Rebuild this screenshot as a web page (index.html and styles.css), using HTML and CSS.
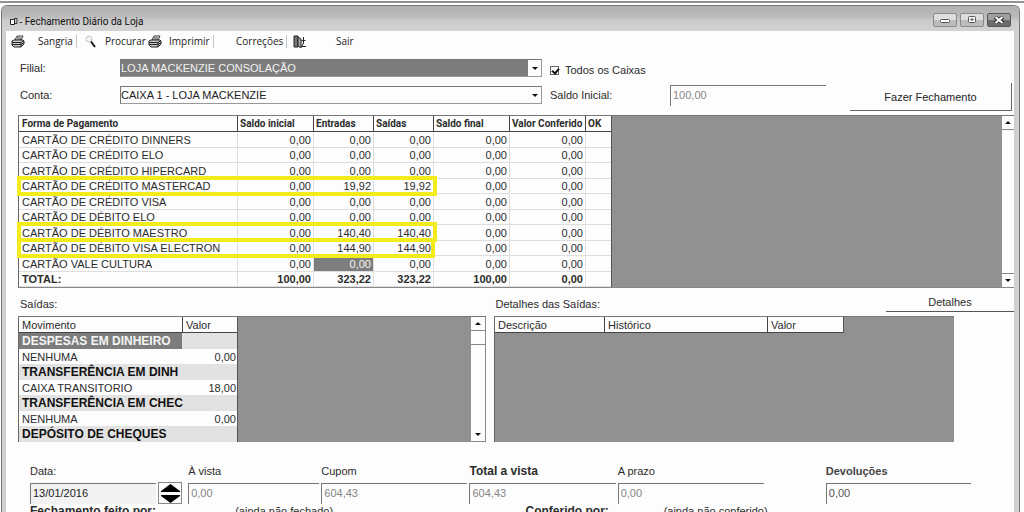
FILE: index.html
```html
<!DOCTYPE html>
<html lang="pt-BR">
<head>
<meta charset="utf-8">
<title>Fechamento Diário da Loja</title>
<link rel="stylesheet" href="styles.css">
</head>
<body>
<div class="desktop">
<main class="window">
  <header class="titlebar">
    <svg class="app-icon" width="9" height="9" viewBox="0 0 9 9"><path d="M1.500 2.500h4v5h-4z" fill="#fff" stroke="#222"/><path d="M1 2.500h5M5 1.500h3v5H6" fill="none" stroke="#333"/></svg>
    <span class="dash">-</span>
    <h1 class="title">Fechamento Diário da Loja</h1>
    <div class="win-buttons">
      <button class="win-btn" aria-label="Minimizar"><svg width="12" height="8" viewBox="0 0 12 8"><rect x="1.500" y="3.500" width="9" height="3" rx="1" fill="#fff" stroke="#555"/></svg></button>
      <button class="win-btn" aria-label="Maximizar"><svg width="12" height="8" viewBox="0 0 12 8"><rect x="2.500" y=".5" width="7" height="6" rx="1" fill="#fff" stroke="#555"/><path d="M4.500 3.500h3" stroke="#555" stroke-width="2"/></svg></button>
      <button class="win-btn win-close" aria-label="Fechar"><svg width="12" height="8" viewBox="0 0 12 8"><path d="M2 1l8 6M10 1L2 7" stroke="#333" stroke-width="4"/><path d="M2.500 1l7 6M9.500 1l-7 6" stroke="#fff" stroke-width="2"/></svg></button>
    </div>
  </header>

  <div class="client">
    <nav class="toolbar">
      <button class="tool tool-sangria"><svg width="14" height="13" viewBox="0 0 14 13"><path d="M4 5l2-4h6l-2 4z" fill="#fff" stroke="#333"/><path d="M1 6l2-1h9l1 1v3l-3 3H3L1 10z" fill="#ccc" stroke="#222"/><path d="M1 7.500h9l3-2M1 9.500h9l3-2M10 8v4M6 3h4" stroke="#222" fill="none"/></svg><span>Sangria</span></button>
      <button class="tool tool-procurar"><svg width="11" height="13" viewBox="0 0 11 13"><circle cx="4" cy="4" r="3" fill="#f4f4f4" stroke="#aaa" stroke-dasharray="2 1"/><path d="M6 6.500L10 12" stroke="#111" stroke-width="2"/></svg><span>Procurar</span></button>
      <button class="tool tool-imprimir"><svg width="14" height="13" viewBox="0 0 14 13"><path d="M4 5l2-4h6l-2 4z" fill="#fff" stroke="#333"/><path d="M1 6l2-1h9l1 1v3l-3 3H3L1 10z" fill="#ccc" stroke="#222"/><path d="M1 7.500h9l3-2M1 9.500h9l3-2M10 8v4M6 3h4" stroke="#222" fill="none"/></svg><span>Imprimir</span></button>
      <button class="tool tool-correcoes"><span>Correções</span></button>
      <button class="tool tool-sair"><svg width="13" height="13" viewBox="0 0 13 13"><path d="M1 1h4v11H1z" fill="#777" stroke="#222"/><path d="M5 2l3 2v9L5 11z" fill="#aaa" stroke="#222"/><path d="M8 11.500h5M10.500 2v6M8.500 5.500h4M10.500 8L9 11" stroke="#222" fill="none"/></svg><span>Sair</span></button>
    </nav>

    <form class="filters">
      <label for="filial">Filial:</label>
      <div class="combo combo-active"><select id="filial"><option>LOJA MACKENZIE CONSOLAÇÃO</option></select><span class="combo-arrow"></span></div>
      <label class="check"><input type="checkbox" checked>Todos os Caixas</label>
      <label class="row-two" for="conta">Conta:</label>
      <div class="combo"><select id="conta"><option>CAIXA 1 - LOJA MACKENZIE</option></select><span class="combo-arrow"></span></div>
      <label class="saldo-label" for="saldo">Saldo Inicial:</label>
      <input class="field" id="saldo" value="100,00" disabled>
      <button class="btn-close-day" type="button">Fazer Fechamento</button>
    </form>

    <section class="sheet payments">
      <table class="grid">
        <colgroup><col class="c-form"><col class="c-wide"><col class="c-in"><col class="c-in"><col class="c-wide"><col class="c-wide"><col class="c-ok"></colgroup>
        <thead><tr><th>Forma de Pagamento</th><th>Saldo inicial</th><th>Entradas</th><th>Saídas</th><th>Saldo final</th><th>Valor Conferido</th><th>OK</th></tr></thead>
        <tbody>
          <tr><td>CARTÃO DE CRÉDITO DINNERS</td><td>0,00</td><td>0,00</td><td>0,00</td><td>0,00</td><td>0,00</td><td></td></tr>
          <tr><td>CARTÃO DE CRÉDITO ELO</td><td>0,00</td><td>0,00</td><td>0,00</td><td>0,00</td><td>0,00</td><td></td></tr>
          <tr><td>CARTÃO DE CRÉDITO HIPERCARD</td><td>0,00</td><td>0,00</td><td>0,00</td><td>0,00</td><td>0,00</td><td></td></tr>
          <tr><td>CARTÃO DE CRÉDITO MASTERCAD</td><td>0,00</td><td>19,92</td><td>19,92</td><td>0,00</td><td>0,00</td><td></td></tr>
          <tr><td>CARTÃO DE CRÉDITO VISA</td><td>0,00</td><td>0,00</td><td>0,00</td><td>0,00</td><td>0,00</td><td></td></tr>
          <tr><td>CARTÃO DE DÉBITO ELO</td><td>0,00</td><td>0,00</td><td>0,00</td><td>0,00</td><td>0,00</td><td></td></tr>
          <tr><td>CARTÃO DE DÉBITO MAESTRO</td><td>0,00</td><td>140,40</td><td>140,40</td><td>0,00</td><td>0,00</td><td></td></tr>
          <tr><td>CARTÃO DE DÉBITO VISA ELECTRON</td><td>0,00</td><td>144,90</td><td>144,90</td><td>0,00</td><td>0,00</td><td></td></tr>
          <tr><td>CARTÃO VALE CULTURA</td><td>0,00</td><td class="selected">0,00</td><td>0,00</td><td>0,00</td><td>0,00</td><td></td></tr>
          <tr class="total"><td>TOTAL:</td><td>100,00</td><td>323,22</td><td>323,22</td><td>100,00</td><td>0,00</td><td></td></tr>
        </tbody>
      </table>
      <div class="scrollbar"><button class="sb-btn up" aria-label="Rolar para cima"></button><button class="sb-btn down" aria-label="Rolar para baixo"></button></div>
      <div class="mark mark-mastercad"></div>
      <div class="mark mark-maestro"></div>
      <div class="mark mark-visa"></div>
    </section>

    <div class="captions">
      <h2>Saídas:</h2>
      <h2>Detalhes das Saídas:</h2>
      <button class="btn-details">Detalhes</button>
    </div>

    <div class="lower">
      <section class="sheet moves">
        <table class="grid small">
          <colgroup><col class="c-move"><col class="c-value"></colgroup>
          <thead><tr><th>Movimento</th><th>Valor</th></tr></thead>
          <tbody>
            <tr class="group"><td class="selected">DESPESAS EM DINHEIRO</td><td></td></tr>
            <tr><td>NENHUMA</td><td>0,00</td></tr>
            <tr class="group"><td>TRANSFERÊNCIA EM DINH</td><td></td></tr>
            <tr><td>CAIXA TRANSITORIO</td><td>18,00</td></tr>
            <tr class="group"><td>TRANSFERÊNCIA EM CHEC</td><td></td></tr>
            <tr><td>NENHUMA</td><td>0,00</td></tr>
            <tr class="group"><td>DEPÓSITO DE CHEQUES</td><td></td></tr>
          </tbody>
        </table>
        <div class="scrollbar wide"><button class="sb-btn up" aria-label="Rolar para cima"></button><span class="thumb"></span><button class="sb-btn down" aria-label="Rolar para baixo"></button></div>
      </section>
      <section class="sheet details">
        <table class="grid small">
          <colgroup><col class="c-desc"><col class="c-hist"><col class="c-dval"></colgroup>
          <thead><tr><th>Descrição</th><th>Histórico</th><th>Valor</th></tr></thead>
        </table>
      </section>
    </div>

    <form class="totals">
      <div class="cell"><label for="data">Data:</label><input class="field date" id="data" value="13/01/2016"></div>
      <div class="spinner"><button type="button" aria-label="Dia seguinte"><svg width="19" height="8" viewBox="0 0 19 8"><path d="M9.500 0L19 7v1H0V7z"/></svg></button><button type="button" aria-label="Dia anterior"><svg width="19" height="8" viewBox="0 0 19 8"><path d="M9.500 8L19 1V0H0v1z"/></svg></button></div>
      <div class="cell"><label for="avista">À vista</label><input class="field" id="avista" value="0,00" disabled></div>
      <div class="cell"><label for="cupom">Cupom</label><input class="field" id="cupom" value="604,43" disabled></div>
      <div class="cell"><label class="strong" for="total">Total a vista</label><input class="field" id="total" value="604,43" disabled></div>
      <div class="cell"><label for="aprazo">A prazo</label><input class="field" id="aprazo" value="0,00" disabled></div>
      <div class="cell refunds"><label class="strong" for="devol">Devoluções</label><input class="field" id="devol" value="0,00" disabled></div>
    </form>

    <footer class="signoff">
      <b>Fechamento feito por:</b><span>(ainda não fechado)</span>
      <b>Conferido por:</b><span>(ainda não conferido)</span>
    </footer>
  </div>
</main>
</div>
</body>
</html>
```

FILE: styles.css
```css
* { box-sizing: border-box; }

body {
  margin: 0;
  background: #fdfdfd;
  color: #2c2c2c;
  font: 11px/14px "Liberation Sans", Arial, sans-serif;
}

button, input, select {
  font: inherit;
  color: inherit;
  background: none;
  border: 0;
  border-radius: 0;
  padding: 0;
  margin: 0;
}

.desktop {
  height: 100vh;
  overflow: hidden;
  padding: 2px 4px 0 1px;
  border-top: 1px solid #fdfdfd;
  background: linear-gradient(#8f9390, #8f9390) 0 0 / 100% 2px no-repeat;
}

.window {
  margin-top: 2px;
  border: 1px solid #777;
  border-bottom: 0;
  border-radius: 6px 6px 0 0;
  background: #cfcfcf;
  padding: 0 5px 0 4px;
}

.titlebar {
  display: flex;
  align-items: center;
  height: 25px;
  margin: 0 -5px 0 -4px;
  padding: 0 8px 0 7px;
  border-radius: 5px 5px 0 0;
  background: linear-gradient(#b0b0b0, #bababa 40%, #cccccc 60%, #d2d2d2);
}

.app-icon { margin-top: 5px; }
.dash { margin: 4px 2px 0 1px; }

.title {
  flex: 1;
  margin: 6px 0 0;
  font: 400 10px/14px Roboto, sans-serif;
  color: #111;
}

.win-buttons { display: flex; gap: 3px; margin-top: 3px; }

.win-btn {
  display: grid;
  place-items: center;
  width: 24px;
  height: 14px;
  border: 1px solid #8a8a8a;
  border-radius: 2px;
  background: linear-gradient(#dedede 50%, #bcbcbc 50%);
}

.win-close {
  background: linear-gradient(#a0a0a0 50%, #6c6c6c 50%);
  border-color: #555;
}

.client { background: #fdfdfd; }

.toolbar {
  display: flex;
  height: 20px;
  font: 10px/14px "Open Sans", sans-serif;
  color: #222;
}

.tool {
  display: flex;
  align-items: center;
  height: 20px;
}

.tool-sangria { width: 70px; gap: 13px; padding-left: 5px; }
.tool-procurar { width: 72px; gap: 9px; padding-left: 9px; }
.tool-imprimir { width: 65px; gap: 7px; }
.tool-correcoes { width: 73px; padding-left: 23px; }
.tool-sair { gap: 30px; padding-left: 7px; }

.tool-procurar, .tool-correcoes, .tool-sair {
  background: linear-gradient(#c4c4c4, #c4c4c4) 0 4px / 1px 13px no-repeat;
}

.filters {
  display: grid;
  grid-template-columns: 100px 422fr 128px 156fr 24px 162fr;
  grid-template-rows: 20px 24px;
  row-gap: 5px;
  align-items: center;
  padding: 7px 2px 0 14px;
}

.row-two { grid-column: 1; }

.combo {
  display: grid;
  grid-template-columns: 1fr 13px;
  height: 18px;
  border: 1px solid #999;
  border-top-color: #777;
  border-left-color: #777;
}

.combo select {
  grid-area: 1 / 1;
  min-width: 0;
  appearance: none;
  line-height: 16px;
  color: #222;
}

.combo-active select {
  background: #7d7d7d;
  color: #f2f2f2;
}

.combo-arrow {
  grid-area: 1 / 2;
  display: grid;
  place-items: center;
}

.combo-arrow::before, .sb-btn::before {
  content: "";
  border: 3px solid transparent;
  border-top-color: #111;
  border-bottom-width: 0;
}

.check {
  display: flex;
  align-items: center;
  gap: 6px;
  padding: 4px 0 0 8px;
  grid-column: 3 / -1;
}

.check input {
  appearance: none;
  width: 9px;
  height: 9px;
  border: 1px solid #666;
  position: relative;
}

.check input:checked::after {
  content: "";
  position: absolute;
  left: 2px;
  top: 0;
  width: 3px;
  height: 5px;
  border: solid #111;
  border-width: 0 2px 2px 0;
  transform: rotate(40deg);
}

.saldo-label { padding-left: 8px; }

.field {
  width: 100%;
  min-width: 0;
  height: 21px;
  padding: 0 2px 2px;
  border-top: 1px solid #777;
  border-left: 1px solid #777;
  font-size: 11px;
}

.field:disabled { color: #858585; }

.btn-close-day {
  grid-column: 6;
  align-self: start;
  height: 28px;
  border-right: 1px solid #666;
  border-bottom: 1px solid #666;
  color: #222;
}

.sheet {
  position: relative;
  display: flex;
  justify-content: space-between;
  background: #919191;
  border-top: 1px solid #777;
  border-left: 1px solid #666;
}

.payments {
  margin: 8px 0 0 12px;
  border-bottom: 1px solid #888;
}

.grid {
  flex: none;
  table-layout: fixed;
  align-self: flex-start;
  border-spacing: 0;
  background: #fdfdfd;
  border-right: 1px solid #555;
  font-size: 11px;
  line-height: 14px;
}

.grid th {
  height: 16px;
  padding: 0 2px;
  border-bottom: 1px solid #444;
  font: 700 10px/14px Roboto, sans-serif;
  text-align: left;
  white-space: nowrap;
}

.grid th + th { border-left: 1px solid #444; }

.grid td {
  height: 15px;
  padding: 0 2px 0 3px;
  white-space: nowrap;
  border-bottom: 1px solid #dedede;
}

.grid tr:nth-child(odd) td { height: 16px; }

.grid td + td {
  text-align: right;
  border-left: 1px solid #dedede;
}

.grid .selected { background: #7d7d7d; color: #f5f5f5; }
.grid .total { font-weight: 700; }

.payments .grid { width: 593px; }
.payments th:first-child { padding-left: 3px; }
.c-form { width: 218px; }
.c-wide { width: 76px; }
.c-in { width: 60px; }
.c-ok { width: 26px; }

.moves .grid { width: 219px; }
.c-move { width: 163px; }
.c-value { width: 55px; }
.details .grid { width: 349px; }
.c-desc { width: 109px; }
.c-hist { width: 163px; }
.c-dval { width: 76px; }

.small th {
  padding-left: 3px;
  font: 400 11px/14px "Liberation Sans", Arial, sans-serif;
}

.small td { border: 0; }
.small td + td { border: 0; padding-right: 1px; }
.small .group td { background: #e2e2e2; font-size: 12px; font-weight: 700; color: #111; }
.small .group .selected { background: #7d7d7d; color: #f5f5f5; }

.scrollbar {
  display: flex;
  flex-direction: column;
  width: 12px;
  background: #fdfdfd;
}

.scrollbar.wide { width: 15px; border-right: 1px solid #888; }

.sb-btn {
  display: grid;
  place-items: center;
  height: 14px;
  border-bottom: 1px solid #888;
}

.sb-btn.up::before { transform: rotate(180deg); }
.sb-btn.down { margin-top: auto; }
.payments .sb-btn.down { border-top: 1px solid #888; border-bottom: 0; }
.thumb { height: 14px; border-bottom: 1px solid #888; }

/* Highlighter boxes drawn over the reconciled rows */
.mark {
  position: absolute;
  left: -2px;
  width: 420px;
  height: 20px;
  border: 4px solid #f3ec1c;
}

.mark-mastercad { top: 60px; }
.mark-maestro { top: 106px; }
.mark-visa { top: 122px; width: 418px; }

.captions {
  display: grid;
  grid-template-columns: 475fr 390fr 128fr;
  align-items: end;
  height: 28px;
  padding: 0 0 4px 14px;
}

.captions h2 {
  margin: 0;
  font-size: 11px;
  font-weight: 400;
  line-height: 16px;
}

.btn-details {
  height: 19px;
  border-bottom: 1px solid #555;
}

.lower {
  display: grid;
  grid-template-columns: 468fr 460fr;
  gap: 8px;
  padding: 0 60px 0 12px;
}

.totals {
  display: grid;
  grid-template-columns: 126fr 28px 131fr 146fr 146fr 146fr 145fr;
  column-gap: 2px;
  padding: 22px 103px 0 24px;
}

.totals .cell { display: grid; row-gap: 3px; }
.totals label { line-height: 15px; }
.totals .strong, .signoff b { font-size: 12px; font-weight: 700; }
.refunds { margin-left: 60px; margin-right: -60px; }
.totals .refunds .strong { font-size: 11px; color: #444; }
.date { background: #f2f2f2; color: #222; }
.totals .refunds .field { color: #555; }

.spinner {
  display: grid;
  align-content: center;
  justify-items: center;
  gap: 3px;
  height: 22px;
  margin: 18px 4px 0 0;
  border: 1px solid #888;
}

.spinner button { display: grid; }

.signoff {
  display: grid;
  grid-template-columns: 205fr 290fr 138fr 350fr;
  align-items: center;
  padding: 0 0 0 24px;
  line-height: 14px;
}
```
